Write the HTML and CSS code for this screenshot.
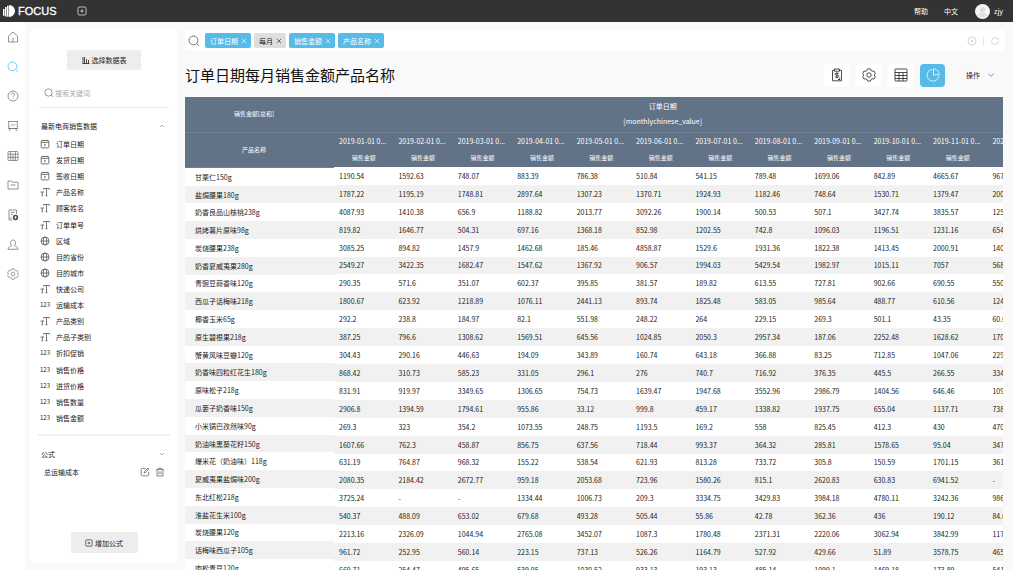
FILE: index.html
```html
<!DOCTYPE html>
<html lang="zh-CN">
<head>
<meta charset="utf-8">
<title>FOCUS</title>
<link rel="stylesheet" href="styles.css">
</head>
<body>
<svg class="defs" aria-hidden="true">
  <symbol id="search" viewBox="0 0 12 12"><circle cx="5.4" cy="5.4" r="4.4"/><path d="M8.600 8.600l2.600 2.200"/></symbol>
  <symbol id="date" viewBox="0 0 10 10"><rect x="1.2" y="1.5" width="7.6" height="7.4" rx=".8"/><path d="M1.2 3.4h7.6M3 .8v1.4M7 .8v1.4M5 5v2.4M4.4 5.2h.6"/></symbol>
  <symbol id="text" viewBox="0 0 10 10"><path d="M3.500 2.600V1.500h6v1.100M6.500 1.500v7.300M5.500 8.800h2M.5 5h3.500M2.300 5v3.800M1.600 8.800h1.400"/></symbol>
  <symbol id="globe" viewBox="0 0 10 10"><circle cx="5" cy="5" r="4"/><ellipse cx="5" cy="5" rx="1.8" ry="4"/><path d="M1 5h8"/></symbol>
  <symbol id="up" viewBox="0 0 6 6"><path d="M1 4l2-2 2 2"/></symbol>
  <symbol id="down" viewBox="0 0 6 6"><path d="M1 2l2 2 2-2"/></symbol>
  <symbol id="gear" viewBox="0 0 14 14"><path stroke-linejoin="round" d="M5.600 .9h2.800l.7 1.700 1.100.6 1.800-.2 1.300 2.400L12.200 7l1.100 1.600-1.300 2.400-1.800-.2-1.100.6-.7 1.700H5.600l-.7-1.700-1.100-.6-1.800.2L.7 8.600 1.800 7 .7 5.400 2 3l1.800.2 1.100-.6z"/><circle cx="7" cy="7" r="2.200"/></symbol>
  <symbol id="plus" viewBox="0 0 10 10"><rect x="1" y="1" width="8" height="8" rx="1.200"/><path d="M5 3.300v3.400M3.300 5h3.400"/></symbol>
  <symbol id="x" viewBox="0 0 6 6"><path d="M.8 .8l4.400 4.400M5.200 .8L.8 5.200"/></symbol>
</svg>

<header class="topbar">
  <svg class="logo" viewBox="0 0 12 12"><path d="M0 4h1.500v6.800H0zM2 2h1.500v9.500H2zM4 .8h1.500v11H4zM6 0a6 6 0 0 1 0 12z"/></svg>
  <span class="brand">FOCUS</span>
  <button class="plain new-tab" aria-label="新建"><svg class="ic s10"><use href="#plus"/></svg></button>
  <nav class="top-links"><a href="#">帮助</a><a href="#">中文</a></nav>
  <svg class="avatar" viewBox="0 0 16 16"><circle cx="8" cy="8" r="8" fill="#f6f6f6"/><circle cx="8" cy="6" r="2.800" fill="#ddd"/><path d="M2.800 12c2-4 8.400-4 10.400 0a7 7 0 0 1-10.400 0z" fill="#e2e2e2"/></svg>
  <span class="user">zjy</span>
</header>

<div class="app">
  <nav class="rail">
    <div class="rail-links">
    <a href="#" aria-label="首页"><svg class="ic s12" viewBox="0 0 12 12"><path d="M1.500 5L6 1l4.500 4v6h-9zM6 11V7"/></svg></a>
    <a href="#" aria-label="搜索" class="active"><svg class="ic s12"><use href="#search"/></svg></a>
    <a href="#" aria-label="帮助"><svg class="ic s12" viewBox="0 0 12 12"><circle cx="6" cy="6" r="5"/><path d="M4.300 4.800c0-2.400 3.400-2.200 3.400-.2C7.700 5.800 6 5.800 6 7.200M6 8.300v.9"/></svg></a>
    <a href="#" aria-label="看板"><svg class="ic s12" viewBox="0 0 12 12"><path d="M1 1.500h10M1.700 1.500v7h8.600v-7M3.500 8.500L2.300 11M8.500 8.500L9.700 11M1 8.500h10M3.700 5.800l1.600-1.500 1.300 1.200 1.700-1.300"/></svg></a>
    <a href="#" aria-label="数据表"><svg class="ic s12" viewBox="0 0 12 12"><rect x="1" y="1.500" width="10" height="9" rx=".8"/><path d="M1 4.200h10M1 7.400h10M3.700 1.500v9M6 4.200v6.300M8.400 1.500v9"/></svg></a>
    <a href="#" aria-label="文件夹"><svg class="ic s12" viewBox="0 0 12 12"><path d="M1 10V2h3.600l1 1.300H11V10zM3.500 6h5"/></svg></a>
    <a href="#" aria-label="数据管理"><svg class="ic s12" viewBox="0 0 12 12"><path d="M5.500 11H2V1h7.500v4M4 3.400h3.600M4 5.600h2M2.800 9h2"/><circle class="hub" cx="8.500" cy="8.500" r="1.900"/></svg></a>
    <a href="#" aria-label="用户"><svg class="ic s12" viewBox="0 0 12 12"><path d="M4.600 6.600C2.500 5 3.300 1 6 1s3.500 4 1.400 5.600c.5.900 3.600.7 3.600 3.700H1c0-3 3.100-2.800 3.600-3.700z"/></svg></a>
    <a href="#" aria-label="设置"><svg class="ic s12"><use href="#gear"/></svg></a>
    </div>
  </nav>

  <aside class="panel">
    <button class="btn choose"><svg class="ic s8" viewBox="0 0 8 8"><path d="M1 7.500V1M2.500 7.500V1M4.500 7.500V3M6.500 7.500V4M.5 7.500h7"/></svg>选择数据表</button>
    <label class="find"><svg class="ic s10"><use href="#search"/></svg><input type="text" placeholder="搜索关键词" aria-label="搜索关键词"></label>
    <button class="plain section">最新电商销售数据<svg class="ic s6"><use href="#up"/></svg></button>
    <ul class="fields">
      <li><svg class="ic s10"><use href="#date"/></svg>订单日期</li>
      <li><svg class="ic s10"><use href="#date"/></svg>发货日期</li>
      <li><svg class="ic s10"><use href="#date"/></svg>签收日期</li>
      <li><svg class="ic s10"><use href="#text"/></svg>产品名称</li>
      <li><svg class="ic s10"><use href="#text"/></svg>顾客姓名</li>
      <li><svg class="ic s10"><use href="#text"/></svg>订单单号</li>
      <li><svg class="ic s10"><use href="#globe"/></svg>区域</li>
      <li><svg class="ic s10"><use href="#globe"/></svg>目的省份</li>
      <li><svg class="ic s10"><use href="#globe"/></svg>目的城市</li>
      <li><svg class="ic s10"><use href="#text"/></svg>快递公司</li>
      <li><span class="num">123</span>运输成本</li>
      <li><svg class="ic s10"><use href="#text"/></svg>产品类别</li>
      <li><svg class="ic s10"><use href="#text"/></svg>产品子类别</li>
      <li><span class="num">123</span>折扣促销</li>
      <li><span class="num">123</span>销售价格</li>
      <li><span class="num">123</span>进货价格</li>
      <li><span class="num">123</span>销售数量</li>
      <li><span class="num">123</span>销售金额</li>
    </ul>
    <div class="formulas">
      <button class="plain section">公式<svg class="ic s6"><use href="#down"/></svg></button>
      <div class="formula"><span>总运输成本</span>
        <button class="plain" aria-label="编辑"><svg class="ic s10" viewBox="0 0 10 10"><path d="M5.500 1.400H2.200c-.6 0-1 .4-1 1v5.400c0 .6.400 1 1 1h5.400c.6 0 1-.4 1-1V5M4.200 6l.3-1.400L8 1l1 1-3.500 3.600z"/></svg></button>
        <button class="plain" aria-label="删除"><svg class="ic s10" viewBox="0 0 10 10"><path d="M1.300 2.400h7.400M3.500 2.400V1.200h3v1.200M2 2.400V9h6V2.400M4 4.300v3M6 4.300v3"/></svg></button>
      </div>
    </div>
    <button class="btn add"><svg class="ic s8"><use href="#plus"/></svg>增加公式</button>
  </aside>

  <main class="main">
    <div class="query">
      <svg class="ic s12"><use href="#search"/></svg>
      <button class="tag">订单日期<svg class="ic s6"><use href="#x"/></svg></button>
      <button class="tag grey">每月<svg class="ic s6"><use href="#x"/></svg></button>
      <button class="tag">销售金额<svg class="ic s6"><use href="#x"/></svg></button>
      <button class="tag">产品名称<svg class="ic s6"><use href="#x"/></svg></button>
      <span class="query-end">
        <button class="plain" aria-label="清除"><svg class="ic s10" viewBox="0 0 10 10"><circle cx="5" cy="5" r="4"/><path d="M3.800 3.800l2.400 2.400M6.200 3.800L3.800 6.200"/></svg></button>
        <i></i>
        <button class="plain" aria-label="刷新"><svg class="ic s10" viewBox="0 0 10 10"><path d="M1.500 5A3.500 3.500 0 0 1 8.200 3.600V2M8.500 5A3.500 3.500 0 0 1 1.800 6.400V8"/></svg></button>
      </span>
    </div>

    <div class="heading">
      <h1>订单日期每月销售金额产品名称</h1>
      <div class="tools">
        <button aria-label="复制"><svg class="ic s14" viewBox="0 0 14 14"><path d="M4.500 2.300H2.500v10.500h9V2.300h-2M4.500 1h5v2.200h-5zM8.800 5.300H6.200c-1.400 0-1.400 1.900 0 1.900h1.400c1.500 0 1.500 2 0 2H5M7 4.300v6M9.800 9.500v2M8 11.500h2"/></svg></button>
        <button aria-label="设置"><svg class="ic s14"><use href="#gear"/></svg></button>
        <button aria-label="表格"><svg class="ic s14" viewBox="0 0 14 14"><rect x="1" y="1" width="12" height="12" rx=".5"/><path d="M1 4.500h12M1 7.500h12M1 10.500h12M5 4.500V13M9 4.500V13"/></svg></button>
        <button aria-label="图表" class="on"><svg class="ic s14" viewBox="0 0 14 14"><path d="M6 1.400A5.900 5.900 0 1 0 12.800 8.200M7.500 .8v6h5.800A5.900 5.900 0 0 0 7.500 .8z"/></svg></button>
      </div>
      <button class="plain more">操作<svg class="ic s8"><use href="#down"/></svg></button>
    </div>

    <div class="grid">
      <table class="names">
        <thead><tr><th>销售金额[总和]</th></tr><tr><th>产品名称</th></tr></thead>
        <tbody>
        <tr><td>甘栗仁150g<tr><td>盐焗腰果180g<tr><td>奶香良品山核桃238g<tr><td>烘烤薯片原味98g<tr><td>炭烧腰果238g<tr><td>奶香夏威夷果280g<tr><td>青豌豆蒜香味120g<tr><td>西瓜子话梅味218g<tr><td>椰香玉米65g<tr><td>原生碧根果218g<tr><td>蟹黄风味豆瓣120g<tr><td>奶香味四粒红花生180g<tr><td>原味松子218g<tr><td>瓜蒌子奶香味150g<tr><td>小米锅巴孜然味90g<tr><td>奶油味黑葵花籽150g<tr><td>爆米花（奶油味）118g<tr><td>夏威夷果盐焗味200g<tr><td>东北红松218g<tr><td>淮盐花生米100g<tr><td>炭烧腰果120g<tr><td>话梅味西瓜子105g<tr><td>肉松青豆120g
        </tbody>
      </table>
      <div class="scroll">
      <table class="values">
        <thead>
          <tr class="group"><th colspan="11">订单日期<br><span>[monthlychinese_value]</span></th><th></th></tr>
          <tr class="dates"><th>2019-01-01 0...<th>2019-02-01 0...<th>2019-03-01 0...<th>2019-04-01 0...<th>2019-05-01 0...<th>2019-06-01 0...<th>2019-07-01 0...<th>2019-08-01 0...<th>2019-09-01 0...<th>2019-10-01 0...<th>2019-11-01 0...<th>2020-01-01 0...</tr>
          <tr class="measure"><th>销售金额<th>销售金额<th>销售金额<th>销售金额<th>销售金额<th>销售金额<th>销售金额<th>销售金额<th>销售金额<th>销售金额<th>销售金额<th></tr>
        </thead>
        <tbody>
        <tr><td>1190.54<td>1592.63<td>748.07<td>883.39<td>786.38<td>510.84<td>541.15<td>789.48<td>1699.06<td>842.89<td>4665.67<td>967.2
        <tr><td>1787.22<td>1195.19<td>1748.81<td>2897.64<td>1307.23<td>1370.71<td>1924.93<td>1182.46<td>748.64<td>1530.71<td>1379.47<td>200.5
        <tr><td>4087.93<td>1410.38<td>656.9<td>1188.82<td>2013.77<td>3092.26<td>1900.14<td>500.53<td>507.1<td>3427.74<td>3835.57<td>1250.1
        <tr><td>819.82<td>1646.77<td>504.31<td>697.16<td>1368.18<td>852.98<td>1202.55<td>742.8<td>1096.03<td>1196.51<td>1231.16<td>654.3
        <tr><td>3085.25<td>894.82<td>1457.9<td>1462.68<td>185.46<td>4858.87<td>1529.6<td>1931.36<td>1822.38<td>1413.45<td>2000.91<td>1403.2
        <tr><td>2549.27<td>3422.35<td>1682.47<td>1547.62<td>1367.92<td>906.57<td>1994.03<td>5429.54<td>1982.97<td>1015.11<td>7057<td>568.4
        <tr><td>290.35<td>571.6<td>351.07<td>602.37<td>395.85<td>381.57<td>189.82<td>613.55<td>727.81<td>902.66<td>690.55<td>550.1
        <tr><td>1800.67<td>623.92<td>1218.89<td>1076.11<td>2441.13<td>893.74<td>1825.48<td>583.05<td>985.64<td>488.77<td>610.56<td>1240.3
        <tr><td>292.2<td>238.8<td>184.97<td>82.1<td>551.98<td>248.22<td>264<td>229.15<td>269.3<td>501.1<td>43.35<td>60.02
        <tr><td>387.25<td>796.6<td>1308.62<td>1569.51<td>645.56<td>1024.85<td>2050.3<td>2957.34<td>187.06<td>2252.48<td>1628.62<td>1704.1
        <tr><td>304.43<td>290.16<td>446.63<td>194.09<td>343.89<td>160.74<td>643.18<td>366.88<td>83.25<td>712.85<td>1047.06<td>229.4
        <tr><td>868.42<td>310.73<td>585.23<td>331.05<td>296.1<td>276<td>740.7<td>716.92<td>376.35<td>445.5<td>266.55<td>334.1
        <tr><td>831.91<td>919.97<td>3349.65<td>1306.65<td>754.73<td>1639.47<td>1947.68<td>3552.96<td>2986.79<td>1404.56<td>646.46<td>1092.2
        <tr><td>2906.8<td>1394.59<td>1794.61<td>955.86<td>33.12<td>999.8<td>459.17<td>1338.82<td>1937.75<td>655.04<td>1137.71<td>738.5
        <tr><td>269.3<td>323<td>354.2<td>1073.55<td>248.75<td>1193.5<td>169.2<td>558<td>825.45<td>412.3<td>430<td>470.1
        <tr><td>1607.66<td>762.3<td>458.87<td>856.75<td>637.56<td>718.44<td>993.37<td>364.32<td>285.81<td>1578.65<td>95.04<td>347.2
        <tr><td>631.19<td>764.87<td>968.32<td>155.22<td>538.54<td>621.93<td>813.28<td>733.72<td>305.8<td>150.59<td>1701.15<td>361.9
        <tr><td>2080.35<td>2184.42<td>2672.77<td>959.18<td>2053.68<td>723.96<td>1580.26<td>815.1<td>2620.83<td>630.83<td>6941.52<td>-
        <tr><td>3725.24<td>-<td>-<td>1334.44<td>1006.73<td>209.3<td>3334.75<td>3429.83<td>3984.18<td>4780.11<td>3242.36<td>986.1
        <tr><td>540.37<td>488.09<td>653.02<td>679.68<td>493.28<td>505.44<td>55.86<td>42.78<td>362.36<td>436<td>190.12<td>84.06
        <tr><td>2213.16<td>2326.09<td>1044.94<td>2765.08<td>3452.07<td>1087.3<td>1780.48<td>2371.31<td>2220.06<td>3062.94<td>3842.99<td>1170.2
        <tr><td>961.72<td>252.95<td>560.14<td>223.15<td>737.13<td>526.26<td>1164.79<td>527.92<td>429.66<td>51.89<td>3578.75<td>465.3
        <tr><td>669.71<td>254.47<td>495.65<td>539.95<td>1030.52<td>933.13<td>193.13<td>485.14<td>1099.1<td>1469.18<td>173.89<td>541.2
        </tbody>
      </table>
      </div>
    </div>
  </main>
</div>
</body>
</html>
```
FILE: styles.css
```css
* { box-sizing: border-box; }
body {
  margin: 0;
  height: 100vh;
  overflow: hidden;
  display: flex;
  flex-direction: column;
  background: #f9f9f9;
  color: #222;
  font: 7px/10px "Noto Sans CJK SC", "Noto Sans", sans-serif;
}
button, input { font: inherit; color: inherit; }
button { cursor: pointer; border: 0; }
a { color: inherit; text-decoration: none; }
.defs { display: none; }
.plain { background: none; padding: 0; display: flex; align-items: center; }

.ic { flex: none; display: block; fill: none; stroke: currentColor; stroke-width: 0.8; }
.s6 { width: 6px; height: 6px; stroke-width: 0.6; }
.s8 { width: 8px; height: 8px; }
.s10 { width: 10px; height: 10px; }
.s12 { width: 12px; height: 12px; }
.s14 { width: 14px; height: 14px; }

/* top bar */
.topbar {
  flex: none;
  height: 22px;
  padding: 0 10px 0 3px;
  display: flex;
  align-items: center;
  background: #333;
  color: #fff;
}
.logo { width: 12px; height: 12px; fill: #fff; }
.brand { margin-left: 3px; font: 11px/22px "Liberation Sans", Arial, sans-serif; -webkit-text-stroke: 0.3px #fff; }
.new-tab { margin-left: 20px; color: #ddd; }
.top-links { margin-left: auto; display: flex; gap: 16px; }
.avatar { width: 15px; height: 15px; margin: 0 4px 0 17px; }

.app { flex: 1; min-height: 0; display: flex; }

/* icon rail */
.rail { flex: none; width: 25px; background: #fff; color: #777; }
.rail-links { height: 267px; display: flex; flex-direction: column; }
.rail a { flex: 1; display: flex; align-items: center; justify-content: center; }
.rail .active { color: #56bbe6; }
.hub { stroke: #444; stroke-width: 1.5; }

/* field panel */
.panel {
  flex: none;
  width: 148px;
  margin: 7px 7px 7px 5px;
  padding: 21px 8px 10px;
  display: flex;
  flex-direction: column;
  background: #fff;
  border-radius: 6px;
}
.btn {
  align-self: center;
  display: flex;
  align-items: center;
  justify-content: center;
  gap: 2px;
  background: #ededed;
  border-radius: 2px;
}
.choose { width: 74px; height: 20px; }
.find {
  height: 38px;
  margin: 0 1px;
  padding: 9px 0 0 5px;
  display: flex;
  align-items: center;
  gap: 1px;
  border-bottom: 1px solid #eee;
  color: #666;
}
.find input { flex: 1; min-width: 0; padding: 0; border: 0; outline: 0; background: none; }
.find input::placeholder { color: #aaa; }
.section { width: 100%; height: 20px; padding: 0 5px 0 3px; justify-content: space-between; }
.section .ic, .more .ic { color: #777; }
.panel > .section { margin-top: 8px; }
.fields {
  height: 290px;
  margin: 0;
  padding: 0 2px;
  list-style: none;
  display: flex;
  flex-direction: column;
}
.fields li { flex: 1; display: flex; align-items: center; gap: 6px; }
.fields .ic { color: #555; }
.num { width: 10px; font-size: 6px; }
.formulas { margin-top: 8px; padding-top: 8px; border-top: 2px solid #f2f2f2; }
.formula { height: 16px; padding: 0 5px 0 6px; display: flex; align-items: center; gap: 5px; }
.formula span { flex: 1; }
.formula .ic { color: #666; }
.add { width: 67px; height: 21px; margin-top: auto; }

/* main area */
.main { flex: 1; min-width: 0; padding: 8px 8px 0 0; display: flex; flex-direction: column; }
.query {
  flex: none;
  height: 21px;
  padding: 0 5px 0 3px;
  display: flex;
  align-items: center;
  gap: 3px;
  background: #fff;
  border-radius: 4px;
}
.query > .ic { margin-right: 2px; color: #555; }
.tag {
  height: 15px;
  padding: 0 4px 0 5px;
  display: flex;
  align-items: center;
  gap: 3px;
  background: #56bbe6;
  color: #fff;
  border-radius: 2px;
}
.tag.grey { background: #dedede; color: #222; }
.query-end { margin-left: auto; display: flex; align-items: center; gap: 6px; color: #ccc; }
.query-end i { width: 1px; height: 8px; background: #e4e4e4; }

.heading { flex: none; height: 46px; padding: 2px 10px 0 0; display: flex; align-items: center; }
h1 { flex: 1; margin: 0; font-size: 15px; line-height: 22px; font-weight: 400; color: #111; }
.tools { display: flex; gap: 7px; }
.tools button {
  width: 25px;
  height: 23px;
  padding: 0;
  display: flex;
  align-items: center;
  justify-content: center;
  background: #fff;
  border-radius: 4px;
}
.tools .on { background: #56bbe6; color: #fff; }
.more { margin-left: 21px; gap: 7px; }
.more .ic { stroke-width: 0.6; }

/* pivot table */
.grid { flex: 1; min-height: 0; margin-right: 2px; display: flex; align-items: flex-start; overflow: hidden; background: #fff; }
.scroll { flex: 1; min-width: 0; overflow: hidden; }
table { border-collapse: collapse; table-layout: fixed; }
th, td { padding: 0; font-weight: 400; text-align: left; white-space: nowrap; line-height: 10px; }
thead { background: #637387; color: #fff; }
tbody tr:nth-child(even) { background: #f1f1f1; }
.names { flex: none; width: 149px; height: 480px; }
.names th { height: 35px; padding-right: 11px; text-align: center; font-size: 6px; border-bottom: 1px solid #718094; }
.names td { padding-left: 10px; }
.values { width: 713px; height: 482px; }
.values .group th { height: 35px; padding-left: 4px; line-height: 15px; text-align: center; border-bottom: 1px solid #718094; }
.values .dates th { height: 17px; padding-left: 5px; }
.values .measure th { height: 18px; text-align: center; font-size: 6px; }
.values td { padding-left: 5px; }
```
